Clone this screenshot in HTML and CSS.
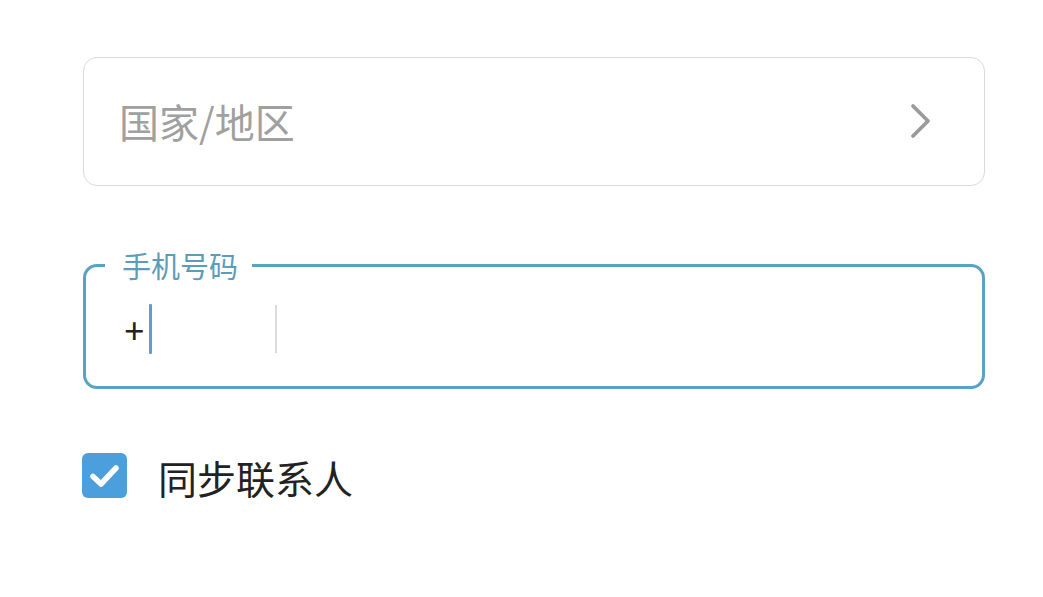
FILE: index.html
```html
<!DOCTYPE html>
<html lang="zh">
<head>
<meta charset="utf-8">
<link rel="stylesheet" href="styles.css">
</head>
<body>
<div class="form">
  <div class="field select">
    <span class="placeholder">国家/地区</span>
    <svg class="chevron" width="22" height="36" viewBox="0 0 22 36"><path d="M3 3 L18 18 L3 33" fill="none" stroke="#9b9b9b" stroke-width="3.8" stroke-linecap="round" stroke-linejoin="round"/></svg>
  </div>
  <div class="field phone">
    <span class="label">手机号码</span>
    <div class="code">
      <span class="plus">+</span>
      <span class="cursor"></span>
    </div>
    <span class="divider"></span>
  </div>
  <label class="check">
    <span class="box">
      <svg width="45" height="45" viewBox="0 0 45 45"><path d="M11 23.5 L19 31 L34 15" fill="none" stroke="#fff" stroke-width="5.5" stroke-linecap="round" stroke-linejoin="round"/></svg>
    </span>
    <span class="check-text">同步联系人</span>
  </label>
</div>
</body>
</html>
```
FILE: styles.css
```css
html, body {
  margin: 0;
  padding: 0;
  background: #ffffff;
}
body {
  font-family: "Noto Sans CJK SC", "Noto Sans", sans-serif;
}
.form {
  padding: 57px 0 0 83px;
  width: 902px;
  display: flex;
  flex-direction: column;
}
.field {
  box-sizing: border-box;
  width: 902px;
  border-radius: 14px;
  display: flex;
  align-items: center;
}
.select {
  height: 129px;
  border: 1.5px solid #dadada;
  padding: 0 52px 0 35px;
  justify-content: space-between;
}
.placeholder {
  font-size: 40px;
  line-height: 1;
  color: #a0a0a0;
  margin-top: -2px;
}
.chevron {
  display: block;
  margin-top: -1px;
}
.phone {
  position: relative;
  margin-top: 78px;
  height: 125px;
  border: 3px solid #5aa2c4;
  padding: 0 0 0 38px;
}
.label {
  position: absolute;
  left: 19px;
  top: -18px;
  padding: 0 14px 0 17px;
  background: #fff;
  font-size: 29px;
  line-height: 32px;
  color: #5d9cb9;
}
.code {
  display: flex;
  align-items: center;
  width: 151px;
  margin-top: 5px;
}
.plus {
  font-family: "Noto Sans", sans-serif;
  font-size: 36px;
  line-height: 1;
  color: #222;
  margin-top: 3px;
}
.cursor {
  width: 3px;
  height: 50px;
  background: #5aa2c4;
  margin-left: 4px;
  border-radius: 1px;
}
.divider {
  width: 1.5px;
  height: 48px;
  background: #dcdcdc;
  margin-top: 5px;
}
.check {
  display: flex;
  align-items: center;
  margin-top: 64px;
  margin-left: -1px;
}
.box {
  width: 45px;
  height: 45px;
  border-radius: 6px;
  background: #4a9fdc;
  display: block;
}
.box svg {
  display: block;
}
.check-text {
  margin-left: 31px;
  font-size: 39px;
  line-height: 1;
  color: #222;
  margin-top: 4px;
}
```
